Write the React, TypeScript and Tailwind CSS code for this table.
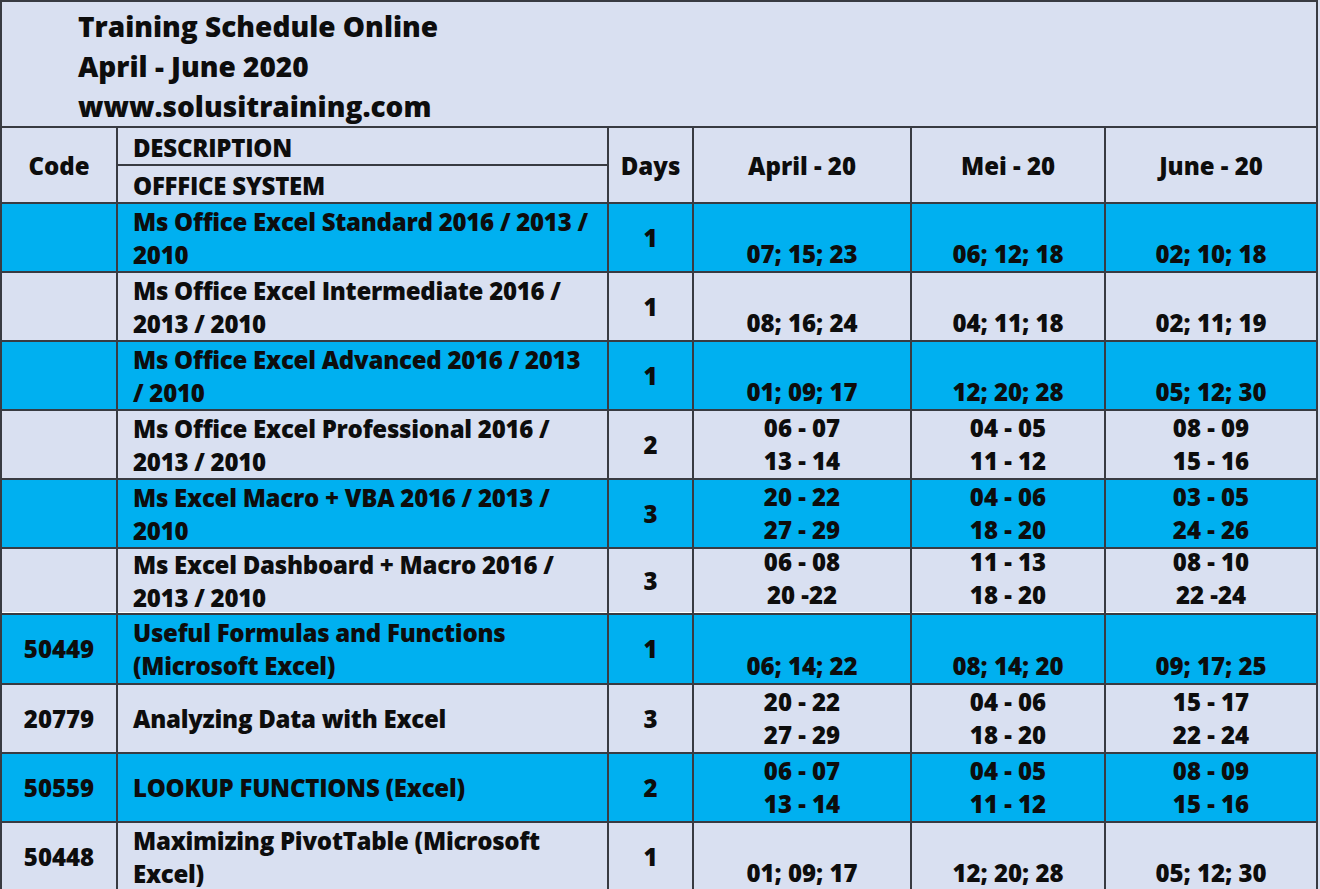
import React from "react";

type Row = {
  code: string;
  desc: string[];
  days: string;
  months: string[][];
  cyan: boolean;
};

const rows: Row[] = [
  { code: "", desc: ["Ms Office Excel Standard 2016 / 2013 /", "2010"], days: "1", months: [["07; 15; 23"], ["06; 12; 18"], ["02; 10; 18"]], cyan: true },
  { code: "", desc: ["Ms Office Excel Intermediate 2016 /", "2013 / 2010"], days: "1", months: [["08; 16; 24"], ["04; 11; 18"], ["02; 11; 19"]], cyan: false },
  { code: "", desc: ["Ms Office Excel Advanced 2016 / 2013", "/ 2010"], days: "1", months: [["01; 09; 17"], ["12; 20; 28"], ["05; 12; 30"]], cyan: true },
  { code: "", desc: ["Ms Office Excel Professional 2016 /", "2013 / 2010"], days: "2", months: [["06 - 07", "13 - 14"], ["04 - 05", "11 - 12"], ["08 - 09", "15 - 16"]], cyan: false },
  { code: "", desc: ["Ms Excel Macro + VBA 2016 / 2013 /", "2010"], days: "3", months: [["20 - 22", "27 - 29"], ["04 - 06", "18 - 20"], ["03 - 05", "24 - 26"]], cyan: true },
  { code: "", desc: ["Ms Excel Dashboard + Macro 2016 /", "2013 / 2010"], days: "3", months: [["06 - 08", "20 -22"], ["11 - 13", "18 - 20"], ["08 - 10", "22 -24"]], cyan: false },
  { code: "50449", desc: ["Useful Formulas and Functions", "(Microsoft Excel)"], days: "1", months: [["06; 14; 22"], ["08; 14; 20"], ["09; 17; 25"]], cyan: true },
  { code: "20779", desc: ["Analyzing Data with Excel"], days: "3", months: [["20 - 22", "27 - 29"], ["04 - 06", "18 - 20"], ["15 - 17", "22 - 24"]], cyan: false },
  { code: "50559", desc: ["LOOKUP FUNCTIONS (Excel)"], days: "2", months: [["06 - 07", "13 - 14"], ["04 - 05", "11 - 12"], ["08 - 09", "15 - 16"]], cyan: true },
  { code: "50448", desc: ["Maximizing PivotTable (Microsoft", "Excel)"], days: "1", months: [["01; 09; 17"], ["12; 20; 28"], ["05; 12; 30"]], cyan: false },
];

export default function App() {
  return (
    <div
      className="w-[1320px] h-[889px] overflow-hidden bg-[#d9e0f1] text-[#0d0d0d] font-extrabold"
      style={{ fontFamily: '"Open Sans", "Noto Sans", sans-serif' }}
    >
      <div className="w-[1318px] bg-[#383b42] pt-[2px] px-[2px] flex flex-col gap-[2px]">
        <div className="h-[124px] bg-[#d9e0f1] pl-[76px] pt-[4px] text-[28px] leading-[40px]">
          <div>Training Schedule Online</div>
          <div>April - June 2020</div>
          <div>www.solusitraining.com</div>
        </div>
        <div className="grid grid-cols-[114px_489px_83px_216px_192px_210px] grid-rows-[36px_36px_67px_67px_67px_67px_67px_64px_68px_67px_67px_67px] gap-[2px] text-[24px]">
          <div className="row-span-2 bg-[#d9e0f1] flex items-center justify-center pt-[2px]">Code</div>
          <div className="bg-[#d9e0f1] flex items-center pl-[15px] pt-[3px] tracking-[-0.25px]">DESCRIPTION</div>
          <div className="row-span-2 bg-[#d9e0f1] flex items-center justify-center pt-[2px]">Days</div>
          <div className="row-span-2 bg-[#d9e0f1] flex items-center justify-center pt-[2px]">April - 20</div>
          <div className="row-span-2 bg-[#d9e0f1] flex items-center justify-center pt-[2px]">Mei - 20</div>
          <div className="row-span-2 bg-[#d9e0f1] flex items-center justify-center pt-[2px]">June - 20</div>
          <div className="bg-[#d9e0f1] flex items-center pl-[15px] pt-[3px] tracking-[-0.25px]">OFFFICE SYSTEM</div>
          {rows.map((r, i) => {
            const bg = r.cyan ? "bg-[#00b0f0]" : "bg-[#d9e0f1]";
            const extra = i === 5 ? " border-b border-white" : "";
            return (
              <React.Fragment key={i}>
                <div className={`${bg}${extra} flex items-center justify-center`}>{r.code}</div>
                <div className={`${bg}${extra} flex flex-col justify-center pl-[15px] leading-[33px] tracking-[-0.25px]`}>
                  {r.desc.map((d, j) => (
                    <div key={j} className="whitespace-nowrap">{d}</div>
                  ))}
                </div>
                <div className={`${bg}${extra} flex items-center justify-center`}>{r.days}</div>
                {r.months.map((m, k) => (
                  <div key={k} className={`${bg}${extra} flex flex-col justify-end items-center leading-[33px] pb-[1px]`}>
                    {m.map((v, j) => (
                      <div key={j} className="whitespace-nowrap">{v}</div>
                    ))}
                  </div>
                ))}
              </React.Fragment>
            );
          })}
        </div>
      </div>
    </div>
  );
}
